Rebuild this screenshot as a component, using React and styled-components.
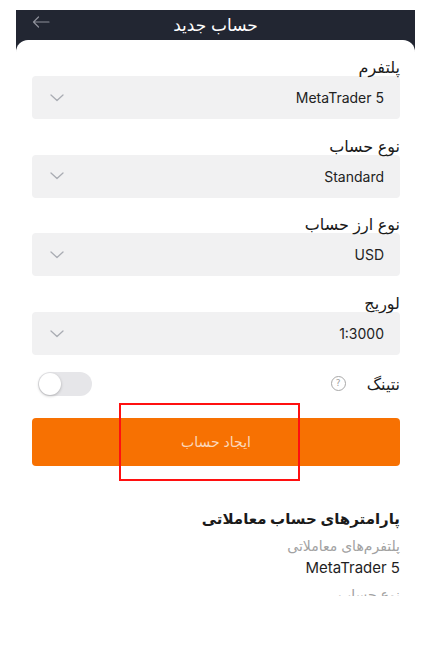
import React from 'react'
import styled, { createGlobalStyle } from 'styled-components'

const GlobalStyle = createGlobalStyle`
    body {
        margin: 0;
        background: #ffffff;
        font-family: "Inter", "DejaVu Sans", sans-serif;
    }
`

const fields = [
    { label: 'پلتفرم', value: 'MetaTrader 5' },
    { label: 'نوع حساب', value: 'Standard' },
    { label: 'نوع ارز حساب', value: 'USD' },
    { label: 'لوریج', value: '1:3000' },
]

function Chevron() {
    return (
        <svg width="14" height="8" viewBox="0 0 14 8">
            <polyline points="1,1 7,6.5 13,1" fill="none" stroke="#a9acb3" strokeWidth="1.3" strokeLinecap="round" strokeLinejoin="round" />
        </svg>
    )
}

function BackArrow() {
    return (
        <svg width="18" height="12" viewBox="0 0 18 12">
            <path d="M17 6H1.5M6.5 1L1.5 6l5 5" fill="none" stroke="#8e909a" strokeWidth="1.2" strokeLinecap="round" strokeLinejoin="round" />
        </svg>
    )
}

function App() {
    return (
        <>
            <GlobalStyle />
            <Page>
                <Frame>
                    <Header>
                        <Back><BackArrow /></Back>
                        <Title>حساب جدید</Title>
                    </Header>
                    <Card>
                        {fields.map((f) => (
                            <Field key={f.label}>
                                <Label>{f.label}</Label>
                                <Select>
                                    <span>{f.value}</span>
                                    <Chevron />
                                </Select>
                            </Field>
                        ))}
                        <ToggleRow>
                            <NettingLabel>
                                نتینگ
                                <Help>?</Help>
                            </NettingLabel>
                            <Switch><Knob /></Switch>
                        </ToggleRow>
                        <ButtonWrap>
                            <CreateButton>ایجاد حساب</CreateButton>
                            <Highlight />
                        </ButtonWrap>
                        <Params>
                            <ParamsTitle>پارامترهای حساب معاملاتی</ParamsTitle>
                            <ParamLabel>پلتفرم‌های معاملاتی</ParamLabel>
                            <ParamValue>MetaTrader 5</ParamValue>
                            <Clipped>
                                <ParamLabel>نوع حساب</ParamLabel>
                            </Clipped>
                        </Params>
                    </Card>
                </Frame>
            </Page>
        </>
    )
}

export default App

const Page = styled.div`
    padding: 10px 17px 0 16px;
    height: 637px;
    box-sizing: border-box;
    overflow: hidden;
`

const Frame = styled.div`
    background: #222632;
    direction: rtl;
`

const Header = styled.div`
    position: relative;
    height: 30px;
    display: flex;
    align-items: center;
    justify-content: center;
`

const Back = styled.div`
    position: absolute;
    left: 16px;
    top: 6px;
    display: flex;
`

const Title = styled.div`
    color: #ffffff;
    font-size: 17px;
    margin-top: -1px;
`

const Card = styled.div`
    background: #ffffff;
    border-radius: 12px 12px 0 0;
    padding: 18px 15px 0 16px;
`

const Field = styled.div`
    margin-bottom: 17.7px;
`

const Label = styled.div`
    font-size: 16px;
    line-height: 18px;
    color: #1a1a1a;
`

const Select = styled.div`
    height: 43px;
    background: #f1f1f2;
    border-radius: 4px;
    display: flex;
    align-items: center;
    justify-content: space-between;
    padding: 0 16px 0 18px;
    font-size: 14px;
    color: #222;
`

const ToggleRow = styled.div`
    height: 28px;
    margin-top: -3px;
    display: flex;
    align-items: center;
    justify-content: space-between;
    padding-left: 6px;
`

const NettingLabel = styled.div`
    display: flex;
    align-items: center;
    gap: 21px;
    font-size: 16px;
    color: #1a1a1a;
`

const Help = styled.span`
    width: 13px;
    height: 13px;
    border: 1px solid #a8a8a8;
    border-radius: 50%;
    color: #a0a0a0;
    font-size: 9px;
    line-height: 13px;
    text-align: center;
    font-family: "DejaVu Sans", sans-serif;
`

const Switch = styled.div`
    width: 54px;
    height: 24px;
    border-radius: 12px;
    background: #e6e6e9;
    display: flex;
    justify-content: flex-end;
    align-items: center;
    padding: 0 1px;
    box-sizing: border-box;
`

const Knob = styled.div`
    width: 22px;
    height: 22px;
    border-radius: 50%;
    background: #ffffff;
    box-shadow: 0 1px 3px rgba(0, 0, 0, 0.25);
`

const ButtonWrap = styled.div`
    position: relative;
    margin-top: 20px;
`

const CreateButton = styled.div`
    height: 48px;
    background: #f77102;
    border-radius: 4px;
    color: #fbd8bd;
    font-size: 14px;
    display: flex;
    align-items: center;
    justify-content: center;
`

const Highlight = styled.div`
    position: absolute;
    left: 87px;
    top: -15px;
    width: 181px;
    height: 78px;
    border: 2px solid #ff1010;
    box-sizing: border-box;
`

const Params = styled.div`
    margin-top: 43px;
`

const ParamsTitle = styled.div`
    font-size: 15px;
    font-weight: bold;
    color: #1a1a1a;
    line-height: 20px;
`

const ParamLabel = styled.div`
    font-size: 14px;
    color: #a2a2a2;
    margin-top: 8px;
    line-height: 18px;
`

const ParamValue = styled.div`
    font-size: 15px;
    color: #1f1f1f;
    line-height: 20px;
    margin-top: 3px;
`

const Clipped = styled.div`
    height: 18px;
    overflow: hidden;
`
